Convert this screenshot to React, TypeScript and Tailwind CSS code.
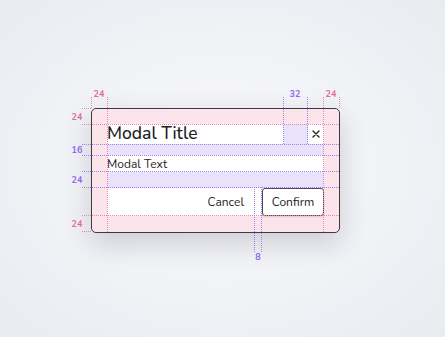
import React from 'react'

const font = { fontFamily: '"Nunito", "Lato", "Noto Sans", sans-serif' }

type Tone = 'pink' | 'purple'

// dotted measurement guides drawn over the modal
function VLine({ x, y1, y2, tone }: { x: number; y1: number; y2: number; tone: Tone }) {
  return (
    <div
      className={`absolute w-0 border-l border-dotted ${tone === 'pink' ? 'border-[#ee86ab]' : 'border-[#a47ff3]'}`}
      style={{ left: x, top: y1, height: y2 - y1 }}
    />
  )
}

function HLine({ y, x1, x2, tone }: { y: number; x1: number; x2: number; tone: Tone }) {
  return (
    <div
      className={`absolute h-0 border-t border-dotted ${tone === 'pink' ? 'border-[#ee86ab]' : 'border-[#a47ff3]'}`}
      style={{ top: y, left: x1, width: x2 - x1 }}
    />
  )
}

function Label({ x, y, text, tone }: { x: number; y: number; text: string; tone: Tone }) {
  return (
    <span
      className={`absolute -translate-x-1/2 -translate-y-1/2 text-[9px] font-bold leading-none ${tone === 'pink' ? 'text-[#e56c98]' : 'text-[#9466ee]'}`}
      style={{ left: x, top: y }}
    >
      {text}
    </span>
  )
}

export default function App() {
  return (
    <div
      className="relative w-[445px] h-[337px] overflow-hidden bg-[radial-gradient(ellipse_at_center,#f9f9fb_0%,#f1f2f6_55%,#e9ebf1_100%)] pl-[91px] pt-[108px]"
      style={font}
    >
      {/* Modal */}
      <div className="w-[249px] h-[125px] rounded-[5px] border border-[#3b3b3f] bg-[#fbe5ea] p-[15px] shadow-[0_10px_28px_rgba(40,45,70,0.2)]">
        <div className="flex flex-col">
          <div className="flex h-[20px]">
            <div className="flex-1 bg-white flex items-center text-[17.5px] font-medium text-[#1d1d1f] leading-none">Modal Title</div>
            <div className="w-[24px] bg-[#e9e2fb]" />
            <div className="w-[16px] bg-white flex items-center justify-center">
              <svg width="8" height="8" viewBox="0 0 8 8" fill="none" stroke="#222" strokeWidth="1.4" strokeLinecap="round">
                <path d="M1 1L7 7M7 1L1 7" />
              </svg>
            </div>
          </div>
          <div className="h-[11px] bg-[#e9e2fb]" />
          <div className="h-[17px] bg-white flex items-center text-[12px] text-[#1d1d1f] leading-none">Modal Text</div>
          <div className="h-[16px] bg-[#e9e2fb]" />
          <div className="flex h-[28px] bg-white">
            <div className="flex-1 flex items-center justify-end pr-[11px] text-[12px] text-[#1d1d1f]">Cancel</div>
            <div className="w-[7px]" />
            <button className="w-[62px] h-[28px] rounded-[3px] border border-[#4a4a50] bg-white text-[12px] text-[#1d1d1f] shadow-[0_1px_2px_rgba(0,0,0,0.12)]">
              Confirm
            </button>
          </div>
        </div>
      </div>

      {/* pink padding guides */}
      <VLine x={91} y1={97} y2={108} tone="pink" />
      <VLine x={107} y1={97} y2={232} tone="pink" />
      <VLine x={323} y1={97} y2={232} tone="pink" />
      <VLine x={339} y1={97} y2={108} tone="pink" />
      <HLine y={108} x1={82} x2={91} tone="pink" />
      <HLine y={124} x1={82} x2={339} tone="pink" />
      <HLine y={215} x1={82} x2={339} tone="pink" />
      <HLine y={231} x1={82} x2={91} tone="pink" />

      {/* purple spacing guides */}
      <VLine x={283} y1={97} y2={144} tone="purple" />
      <VLine x={307} y1={97} y2={144} tone="purple" />
      <HLine y={144} x1={82} x2={339} tone="purple" />
      <HLine y={155} x1={82} x2={339} tone="purple" />
      <HLine y={171} x1={82} x2={339} tone="purple" />
      <HLine y={187} x1={82} x2={339} tone="purple" />
      <VLine x={254} y1={187} y2={252} tone="purple" />
      <VLine x={261} y1={187} y2={252} tone="purple" />

      <Label x={99} y={94} text="24" tone="pink" />
      <Label x={295} y={94} text="32" tone="purple" />
      <Label x={331} y={94} text="24" tone="pink" />
      <Label x={77} y={117} text="24" tone="pink" />
      <Label x={77} y={150} text="16" tone="purple" />
      <Label x={77} y={180} text="24" tone="purple" />
      <Label x={77} y={224} text="24" tone="pink" />
      <Label x={258} y={257} text="8" tone="purple" />
    </div>
  )
}
